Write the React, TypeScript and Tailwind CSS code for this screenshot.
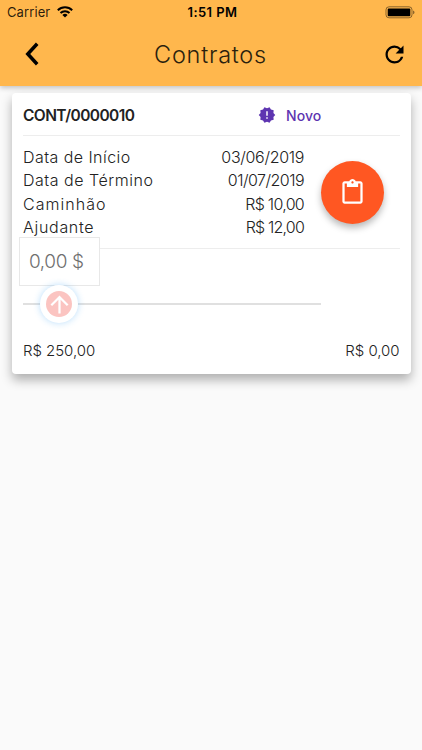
import React, { useState } from 'react';
import { MdArrowUpward, MdContentPaste, MdNewReleases, MdRefresh } from 'react-icons/md';

const rows = [
  { label: 'Data de Início', value: '03/06/2019', labelClass: 'tracking-[0.45px]', valueClass: 'tracking-[-0.32px]' },
  { label: 'Data de Término', value: '01/07/2019', labelClass: 'tracking-[0.53px]', valueClass: 'tracking-[-0.53px]' },
  { label: 'Caminhão', value: 'R$ 10,00', labelClass: 'tracking-[1.05px]', valueClass: 'tracking-[-0.7px]' },
  { label: 'Ajudante', value: 'R$ 12,00', labelClass: 'tracking-[0.7px]', valueClass: 'tracking-[-0.8px]' },
];

function StatusBar() {
  return (
    <div className="grid grid-cols-3 items-center h-6 pl-[7px] pr-[7px] text-[13px] text-black/85">
      <div className="flex items-center gap-[7px]">
        <span className="pt-px tracking-[0.1px]">Carrier</span>
        <svg width="16" height="12" viewBox="0 0 16 12" fill="none" stroke="#000" strokeWidth="2">
          <path d="M.8 4.2a10.3 10.3 0 0 1 14.4 0" />
          <path d="M3.5 7a6.4 6.4 0 0 1 9 0" />
          <path d="M8 11.6 5.4 9a3.8 3.8 0 0 1 5.2 0z" fill="#000" stroke="none" />
        </svg>
      </div>
      <span className="text-center font-semibold tracking-[0.45px] text-black whitespace-nowrap pl-[3px] pt-px">1:51 PM</span>
      <div className="flex justify-end">
        <svg width="30" height="13" viewBox="0 0 30 13">
          <rect x="1" y=".8" width="26" height="11" rx="3" fill="none" stroke="#000" strokeOpacity=".45" />
          <rect x="2.7" y="2.4" width="22.6" height="7.9" rx="1" fill="#000" />
          <path d="M28.2 4.6c1.7.5 1.7 3.2 0 3.7z" fill="#000" fillOpacity=".55" />
        </svg>
      </div>
    </div>
  );
}

export default function App() {
  const [amount, setAmount] = useState('0,00 $');

  return (
    <div className="w-[422px] h-[750px] overflow-hidden bg-[#fafafa] font-['Inter',sans-serif] text-[#222]">
      <header className="h-[86px] bg-[#ffb74d] shadow-[0_2px_5px_rgba(0,0,0,0.22)]">
        <StatusBar />
        <div className="flex items-center justify-between h-[60px] pl-[25px] pr-[14px]">
          <button className="w-[15px]">
            <svg width="14" height="24" viewBox="0 0 14 24" fill="none" stroke="#000" strokeWidth="3.5">
              <path d="M12.2 1.8 2.8 12l9.4 10.2" />
            </svg>
          </button>
          <h1 className="pt-[2px] text-[23.5px] font-light tracking-[0.75px] text-[#2b1f0d]">Contratos</h1>
          <button>
            <MdRefresh size={27} className="text-black" />
          </button>
        </div>
      </header>

      <main className="pt-[7px] pl-[11.5px] pr-[11.5px]">
        <section className="h-[281px] pl-[11.5px] pr-[11px] rounded-[4px] bg-white shadow-[0_6px_11px_rgba(0,0,0,0.3)]">
          <div className="flex items-center h-[43px] border-b border-[#ededed]">
            <span className="w-[235px] pt-[3px] text-[15.5px] font-semibold tracking-[-0.58px] text-[#222]">CONT/0000010</span>
            <MdNewReleases size={18} className="mt-[2px] text-[#5e35b1]" />
            <span className="pl-[10px] pt-[2px] text-[14px] font-medium tracking-[0.05px] text-[#5e35b1]">Novo</span>
          </div>

          <div className="flex h-[113px] pt-[9.5px] border-b border-[#ededed]">
            <div className="w-[281px]">
              {rows.map((row) => (
                <div key={row.label} className="flex justify-between h-[23.6px] leading-[23.6px] text-[16px] font-light">
                  <span className={row.labelClass}>{row.label}</span>
                  <span className={row.valueClass}>{row.value}</span>
                </div>
              ))}
            </div>
            <button className="flex items-center justify-center w-[63px] h-[63px] ml-[17px] mt-[15.5px] rounded-full bg-[#ff5722] text-white shadow-[0_4px_7px_rgba(0,0,0,0.28)]">
              <MdContentPaste size={27} />
            </button>
          </div>

          {/* Slider with its value box floating above the thumb */}
          <div className="relative flex items-center h-[110px] w-[298px]">
            <div className="w-full h-[2px] bg-[#e0e0e0]" />
            <input
              value={amount}
              onChange={(e) => setAmount(e.target.value)}
              className="absolute left-[-4px] top-[-12px] w-[81px] h-[49px] pl-[9px] border border-[#e8e8e8] bg-white text-[19px] font-light tracking-[-0.4px] text-[#707070] outline-none"
            />
            <div className="absolute left-[17px] top-[36px] flex items-center justify-center w-[38px] h-[38px] rounded-full bg-white shadow-[0_0_7px_rgba(33,150,243,0.32)]">
              <div className="flex items-center justify-center w-[26px] h-[26px] rounded-full bg-[#fbc4c1] text-white">
                <MdArrowUpward size={27} className="shrink-0" />
              </div>
            </div>
          </div>

          <div className="flex justify-between -mt-[20px] text-[15px] font-light leading-6">
            <span className="tracking-[-0.05px]">R$ 250,00</span>
            <span className="tracking-[-0.05px]">R$ 0,00</span>
          </div>
        </section>
      </main>
    </div>
  );
}
